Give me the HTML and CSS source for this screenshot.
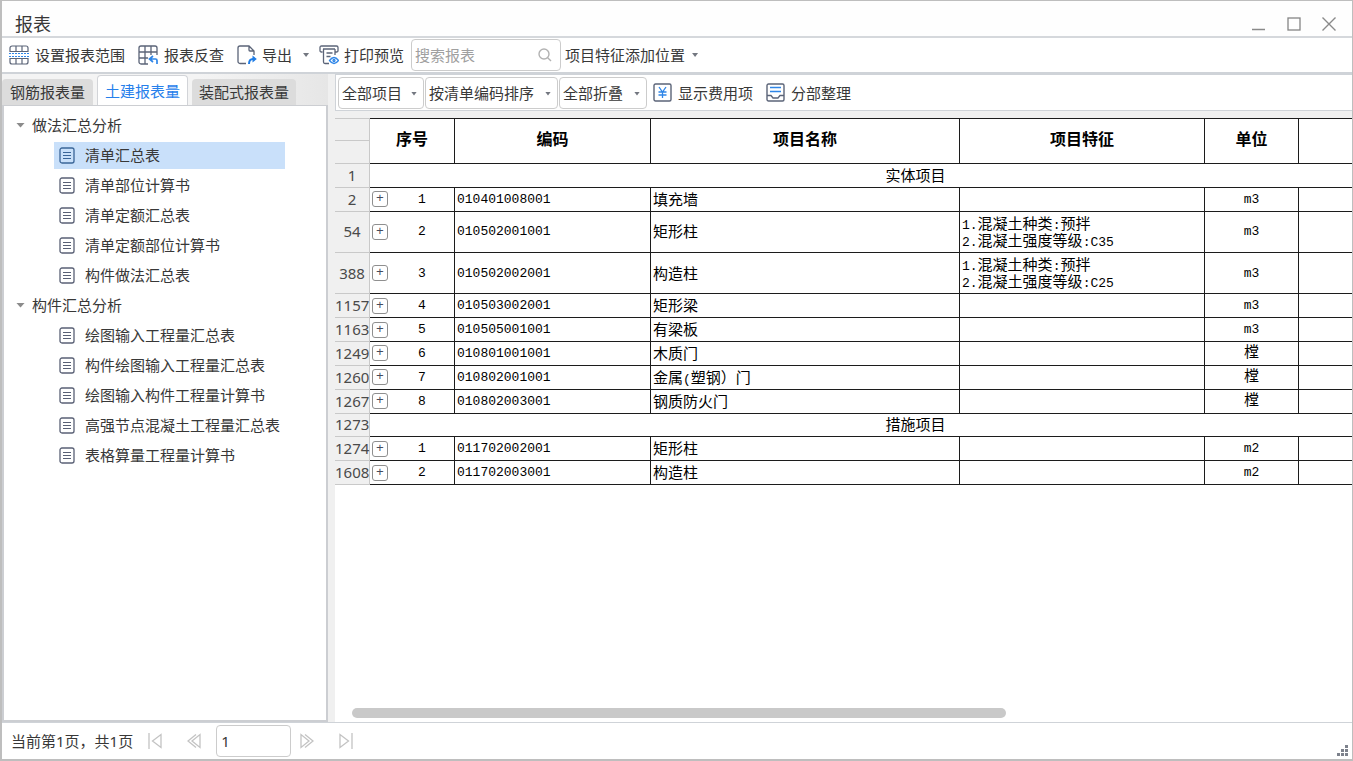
FILE: index.html
```
<!DOCTYPE html>
<html lang="zh-CN">
<head>
<meta charset="utf-8">
<title>报表</title>
<link rel="stylesheet" href="styles.css">
</head>
<body>
<svg class="defs" aria-hidden="true">
  <symbol id="doc" viewBox="0 0 16 17"><rect x="1" y="1" width="14" height="15" rx="2" fill="none" stroke="currentColor" stroke-width="1.3"/><path d="M4 5.500h8M4 8.500h8M4 11.500h8" stroke="currentColor" stroke-width="1.1"/></symbol>
</svg>
<div class="window">
  <header class="titlebar">
    <h1>报表</h1>
    <div class="winctl">
      <button aria-label="最小化"><svg width="14" height="14"><path d="M0 12.5h13" stroke="#8a8a8a" stroke-width="1.5"/></svg></button>
      <button aria-label="最大化"><svg width="14" height="14"><rect x="1" y="1" width="12" height="12" fill="none" stroke="#858585" stroke-width="1.3"/></svg></button>
      <button aria-label="关闭"><svg width="14" height="14"><path d="M.5.5l13 13M13.500.5l-13 13" stroke="#8a8a8a" stroke-width="1.4"/></svg></button>
    </div>
  </header>

  <div class="toolbar">
    <button class="tool"><svg width="20" height="20" fill="none" stroke="#5b6478" stroke-width="1.2"><path d="M1 7V3a2 2 0 0 1 2-2h14a2 2 0 0 1 2 2v4M1 13v4a2 2 0 0 0 2 2h14a2 2 0 0 0 2-2v-4M1 6.500h18M1 13.500h18M7 1v5.500M13 1v5.500M7 13.500V19M13 13.500V19"/><path d="M0 8.500h20M0 11.500h20" stroke="#2f86e8" stroke-dasharray="2 1"/></svg>设置报表范围</button>
    <button class="tool"><svg width="20" height="20" fill="none" stroke="#5b6478" stroke-width="1.3"><path d="M10 19H3a2 2 0 0 1-2-2V3a2 2 0 0 1 2-2h14a2 2 0 0 1 2 2v7M1 7h18M1 13h9M7 1v18M13 1v9"/><path d="M12 14h5.500q1.500 0 1.500 1.500V19M15 11l-3.500 3 3.500 3" stroke="#2f86e8" stroke-width="1.700"/></svg>报表反查</button>
    <button class="tool export"><svg width="20" height="20" fill="none" stroke="#5b6478" stroke-width="1.3"><path d="M9 18.500H3a2 2 0 0 1-2-2V3a2 2 0 0 1 2-2h9l5 5v4M12 1v4q0 1 1 1h4"/><path d="M12 19q0-5 4-5h1" stroke="#1f7de6" stroke-width="2"/><path d="M15.500 10.500l4.300 3.500-4.300 3.500z" fill="#1f7de6" stroke="none"/></svg>导出</button>
    <button class="drop" aria-label="导出选项"><i class="arrow"></i></button>
    <button class="tool preview"><svg width="20" height="20" fill="none" stroke="#5b6478" stroke-width="1.3"><path d="M3.500 7H2.500Q1 7 1 5.500v-3Q1 1 2.500 1h15Q19 1 19 2.500v3Q19 7 17.500 7h-1M4 4h12M4.500 4v13q0 1.500 1.500 1.500h4M16 4v6M7.500 8h6M7.500 11.500h4"/><path d="M10.500 15.500q4.500-6 9 0-4.500 6-9 0z" stroke="#2f86e8"/><circle cx="15" cy="15.500" r="1" stroke="#2f86e8"/></svg>打印预览</button>
    <label class="search"><input type="text" placeholder="搜索报表" aria-label="搜索报表"><svg width="14" height="14" fill="none" stroke="#b2b2b2" stroke-width="1.400"><circle cx="6" cy="6" r="5"/><path d="M9.700 9.700l3.300 3.300"/></svg></label>
    <button class="feature">项目特征添加位置<i class="arrow"></i></button>
  </div>

  <main class="body">
    <aside class="side">
      <nav class="tabs"><button>钢筋报表量</button><button class="active">土建报表量</button><button class="wide">装配式报表量</button></nav>
      <div class="tree">
        <div class="group"><i class="arrow"></i>做法汇总分析</div>
        <ul>
          <li><a href="#" class="sel"><svg><use href="#doc"/></svg>清单汇总表</a></li>
          <li><a href="#"><svg><use href="#doc"/></svg>清单部位计算书</a></li>
          <li><a href="#"><svg><use href="#doc"/></svg>清单定额汇总表</a></li>
          <li><a href="#"><svg><use href="#doc"/></svg>清单定额部位计算书</a></li>
          <li><a href="#"><svg><use href="#doc"/></svg>构件做法汇总表</a></li>
        </ul>
        <div class="group"><i class="arrow"></i>构件汇总分析</div>
        <ul>
          <li><a href="#"><svg><use href="#doc"/></svg>绘图输入工程量汇总表</a></li>
          <li><a href="#"><svg><use href="#doc"/></svg>构件绘图输入工程量汇总表</a></li>
          <li><a href="#"><svg><use href="#doc"/></svg>绘图输入构件工程量计算书</a></li>
          <li><a href="#"><svg><use href="#doc"/></svg>高强节点混凝土工程量汇总表</a></li>
          <li><a href="#"><svg><use href="#doc"/></svg>表格算量工程量计算书</a></li>
        </ul>
      </div>
    </aside>

    <section class="report">
      <div class="filters">
        <span class="combo scope"><select aria-label="项目范围"><option>全部项目</option></select><i class="arrow"></i></span>
        <span class="combo sort"><select aria-label="排序"><option>按清单编码排序</option></select><i class="arrow"></i></span>
        <span class="combo fold"><select aria-label="折叠"><option>全部折叠</option></select><i class="arrow"></i></span>
        <button class="tool fee"><svg width="19" height="19" fill="none"><rect x="1" y="1" width="17" height="17" rx="1.500" stroke="#5b6478" stroke-width="1.400"/><path d="M6 4l3.500 5L13 4M9.500 9v6M5.500 9h8M5.500 12h8" stroke="#2f86e8" stroke-width="1.300"/></svg>显示费用项</button>
        <button class="tool"><svg width="19" height="19" fill="none"><rect x="1" y="1" width="17" height="17" rx="1.500" stroke="#5b6478" stroke-width="1.400"/><path d="M4 4.500h11M4 8.500h11" stroke="#2f86e8" stroke-width="1.400"/><path d="M1 12.500h4l2 2.500h5l2-2.500h4" stroke="#5b6478" stroke-width="1.300"/></svg>分部整理</button>
      </div>
      <div class="sheet">
        <table>
          <colgroup><col class="c-row"><col class="c-no"><col class="c-code"><col class="c-name"><col class="c-feat"><col class="c-unit"><col class="c-qty"></colgroup>
          <thead>
            <tr><td class="rn"></td><th rowspan="2">序号</th><th rowspan="2">编码</th><th rowspan="2">项目名称</th><th rowspan="2">项目特征</th><th rowspan="2">单位</th><th rowspan="2"></th></tr>
            <tr><td class="rn"></td></tr>
          </thead>
          <tbody>
            <tr><td class="rn">1</td><td colspan="6" class="section">实体项目</td></tr>
            <tr><td class="rn">2</td><td class="no"><div><button aria-label="展开">+</button><span>1</span></div></td><td class="code">010401008001</td><td>填充墙</td><td></td><td class="unit">m3</td><td></td></tr>
            <tr class="tall"><td class="rn">54</td><td class="no"><div><button aria-label="展开">+</button><span>2</span></div></td><td class="code">010502001001</td><td>矩形柱</td><td><small>1.</small>混凝土种类<small>:</small>预拌<br><small>2.</small>混凝土强度等级<small>:C35</small></td><td class="unit">m3</td><td></td></tr>
            <tr class="tall"><td class="rn">388</td><td class="no"><div><button aria-label="展开">+</button><span>3</span></div></td><td class="code">010502002001</td><td>构造柱</td><td><small>1.</small>混凝土种类<small>:</small>预拌<br><small>2.</small>混凝土强度等级<small>:C25</small></td><td class="unit">m3</td><td></td></tr>
            <tr><td class="rn">1157</td><td class="no"><div><button aria-label="展开">+</button><span>4</span></div></td><td class="code">010503002001</td><td>矩形梁</td><td></td><td class="unit">m3</td><td></td></tr>
            <tr><td class="rn">1163</td><td class="no"><div><button aria-label="展开">+</button><span>5</span></div></td><td class="code">010505001001</td><td>有梁板</td><td></td><td class="unit">m3</td><td></td></tr>
            <tr><td class="rn">1249</td><td class="no"><div><button aria-label="展开">+</button><span>6</span></div></td><td class="code">010801001001</td><td>木质门</td><td></td><td class="unit cn">樘</td><td></td></tr>
            <tr><td class="rn">1260</td><td class="no"><div><button aria-label="展开">+</button><span>7</span></div></td><td class="code">010802001001</td><td>金属<small>(</small>塑钢）门</td><td></td><td class="unit cn">樘</td><td></td></tr>
            <tr><td class="rn">1267</td><td class="no"><div><button aria-label="展开">+</button><span>8</span></div></td><td class="code">010802003001</td><td>钢质防火门</td><td></td><td class="unit cn">樘</td><td></td></tr>
            <tr><td class="rn">1273</td><td colspan="6" class="section">措施项目</td></tr>
            <tr><td class="rn">1274</td><td class="no"><div><button aria-label="展开">+</button><span>1</span></div></td><td class="code">011702002001</td><td>矩形柱</td><td></td><td class="unit">m2</td><td></td></tr>
            <tr><td class="rn">1608</td><td class="no"><div><button aria-label="展开">+</button><span>2</span></div></td><td class="code">011702003001</td><td>构造柱</td><td></td><td class="unit">m2</td><td></td></tr>
          </tbody>
        </table>
        <div class="scroll"><div class="thumb"></div></div>
      </div>
    </section>
  </main>

  <footer class="pager">
    <span>当前第1页，共1页</span>
    <button aria-label="首页"><svg width="14" height="16"><path d="M1 0v16M13 1.500v13L4.500 8z"/></svg></button>
    <button aria-label="上一页"><svg width="14" height="16"><path d="M9 1.500L1 8l8 6.500M13 1.500v13L5 8z"/></svg></button>
    <input type="text" value="1" aria-label="页码">
    <button aria-label="下一页"><svg width="14" height="16"><path d="M5 1.500L13 8l-8 6.500M1 1.500v13L9 8z"/></svg></button>
    <button aria-label="末页"><svg width="14" height="16"><path d="M13 0v16M1 1.500v13L9.500 8z"/></svg></button>
    <svg class="grip" width="11" height="11" fill="#7d828c"><path d="M8 0h3v3H8zM4 4h3v3H4zM8 4h3v3H8zM0 8h3v3H0zM4 8h3v3H4zM8 8h3v3H8z"/></svg>
  </footer>
</div>
</body>
</html>
```
FILE: styles.css
```
* { box-sizing: border-box; }
body {
  margin: 0;
  font: 15px/20px "Noto Sans", "Noto Sans CJK SC", sans-serif;
  color: #383838;
}
button, input, select { font: inherit; color: inherit; margin: 0; padding: 0; border: 0; background: none; }
svg { flex: none; }
.defs { position: absolute; width: 0; height: 0; }
.arrow {
  display: block;
  flex: none;
  width: 6px;
  height: 4px;
  background: #737780;
  clip-path: polygon(0 0, 100% 0, 50% 100%);
}

.window {
  display: flex;
  flex-direction: column;
  height: 100vh;
  border: solid #bebebe;
  border-width: 1px 1px 2px 2px;
  background: #f0f0f0;
  overflow: hidden;
}

.titlebar {
  display: flex;
  align-items: center;
  justify-content: space-between;
  height: 37px;
  padding: 10px 16px 0 13px;
  background: #fefefe;
  border-bottom: 2px solid #d5d8dc;
}
.titlebar h1 { margin: 0; font-size: 18px; font-weight: 400; }
.winctl { display: flex; gap: 21px; }
.winctl button { display: flex; }

.toolbar {
  display: flex;
  align-items: center;
  height: 36px;
  padding-left: 7px;
  background: #fff;
  border-bottom: 2px solid #cfd3d8;
}
.tool { display: flex; align-items: center; gap: 6px; margin-right: 13px; white-space: nowrap; }
.export { gap: 5px; }
.drop { margin: 0 10px 0 -2px; padding: 6px 0; }
.preview { margin-right: 7px; gap: 5px; }
.search {
  display: flex;
  align-items: center;
  width: 150px;
  height: 32px;
  padding: 0 8px 0 3px;
  border: 1px solid #ccc;
  border-radius: 4px;
}
.search input { flex: 1; min-width: 0; outline: 0; }
.search input::placeholder { color: #a0a0a0; opacity: 1; }
.feature { display: flex; align-items: center; gap: 7px; margin-left: 4px; white-space: nowrap; }

.body { display: flex; flex: 1; min-height: 0; gap: 7px; }
.side { display: flex; flex-direction: column; flex: none; width: 326px; }
.tabs {
  display: flex;
  align-items: flex-end;
  gap: 4px;
  height: 31px;
  background: linear-gradient(90deg, #f4f4f4 60%, #e6e6e6);
}
.tabs button { width: 91px; height: 26px; background: #dcdcdc; border-radius: 4px 4px 0 0; }
.tabs .active { height: 30px; background: #fff; color: #2680eb; border: 1px solid #d2d4d8; border-bottom: 0; }
.tabs .wide { width: 104px; }
.tree {
  flex: 1;
  padding-top: 4px;
  background: #fff;
  border: 2px solid #ccced2;
  border-top-width: 1px;
}
.group { display: flex; align-items: center; gap: 7px; height: 30px; padding-left: 12px; }
.group .arrow { width: 9px; height: 5px; background: #8b8b8b; }
.tree ul { list-style: none; margin: 0; padding: 0 41px 0 50px; }
.tree li { display: flex; align-items: center; height: 30px; }
.tree a {
  display: flex;
  flex: 1;
  align-items: center;
  gap: 10px;
  height: 27px;
  padding-left: 5px;
  color: #383838;
  text-decoration: none;
  white-space: nowrap;
}
.tree a svg { width: 16px; height: 17px; color: #596075; }
.tree .sel { background: #c9e0fa; }
.tree .sel svg { color: #3a6598; }

.report { display: flex; flex: 1; flex-direction: column; min-width: 0; }
.filters {
  display: flex;
  align-items: center;
  height: 37px;
  margin-bottom: 7px;
  padding-left: 2px;
  background: #fff;
  border: solid #cfd3d8;
  border-width: 1px 0 1px 1px;
}
.combo {
  position: relative;
  height: 32px;
  margin-right: 1px;
  border: 1px solid #ccc;
  border-radius: 4px;
}
.combo select { appearance: none; width: 100%; height: 30px; padding-left: 3px; outline: 0; }
.combo .arrow { position: absolute; right: 6px; top: 14px; pointer-events: none; }
.scope { width: 86px; }
.sort { width: 133px; }
.fold { width: 88px; }
.fee { margin-left: 5px; }

.sheet { display: flex; flex: 1; flex-direction: column; justify-content: space-between; background: #fff; overflow: hidden; }
table { width: 1127px; height: 367px; border-spacing: 0; table-layout: fixed; color: #000; }
tr { height: 23px; }
.tall { height: 40px; }
.c-row { width: 35px; }
.c-no { width: 85px; }
.c-code { width: 196px; }
.c-name { width: 309px; }
.c-feat { width: 245px; }
.c-unit { width: 94px; }
.c-qty { width: 163px; }
td, th {
  padding: 0 2px;
  border: solid #1c1c1c;
  border-width: 0 1px 1px 0;
  font-family: "Liberation Sans", "Noto Sans CJK SC", sans-serif;
  line-height: 17px;
  text-align: left;
  white-space: nowrap;
}
th { padding-bottom: 4px; border-top-width: 1px; font-size: 16px; text-align: center; }
.rn {
  padding: 0;
  background: #f0f0f0;
  border-color: #c9c9c9;
  color: #4a4a4a;
  font-family: "Noto Sans", sans-serif;
  text-align: center;
}
thead tr:first-child .rn { border-top-width: 1px; }
.section { text-align: center; }
.code, .unit, .no, small { font-family: "Liberation Mono", "Noto Sans CJK SC", monospace; font-size: 13px; }
small { line-height: 1; }
.unit { text-align: center; }
.cn { font-size: 15px; }
.no div { display: flex; align-items: center; }
.no button {
  width: 16px;
  height: 16px;
  border: 1px solid #8f8f8f;
  border-radius: 3px;
  color: #454b5c;
  line-height: 14px;
}
.no span { flex: 1; padding-left: 4px; text-align: center; }
.scroll { padding: 0 17px 4px; }
.thumb { width: 66.5%; height: 10px; border-radius: 5px; background: #c9c9c9; }

.pager {
  display: flex;
  align-items: center;
  height: 37px;
  padding: 0 4px 0 9px;
  background: #fff;
  border-top: 1px solid #cfd3d8;
}
.pager button { display: flex; }
.pager button svg { fill: none; stroke: #c3c3c3; stroke-width: 1.3; }
.pager span { margin-right: 15px; }
.pager button + button { margin: 0 15px 0 25px; }
.pager input { width: 75px; height: 32px; margin-right: 9px; padding-left: 4px; border: 1px solid #ccc; border-radius: 4px; outline: 0; }
.grip { align-self: flex-end; margin: 0 0 3px auto; }
```
